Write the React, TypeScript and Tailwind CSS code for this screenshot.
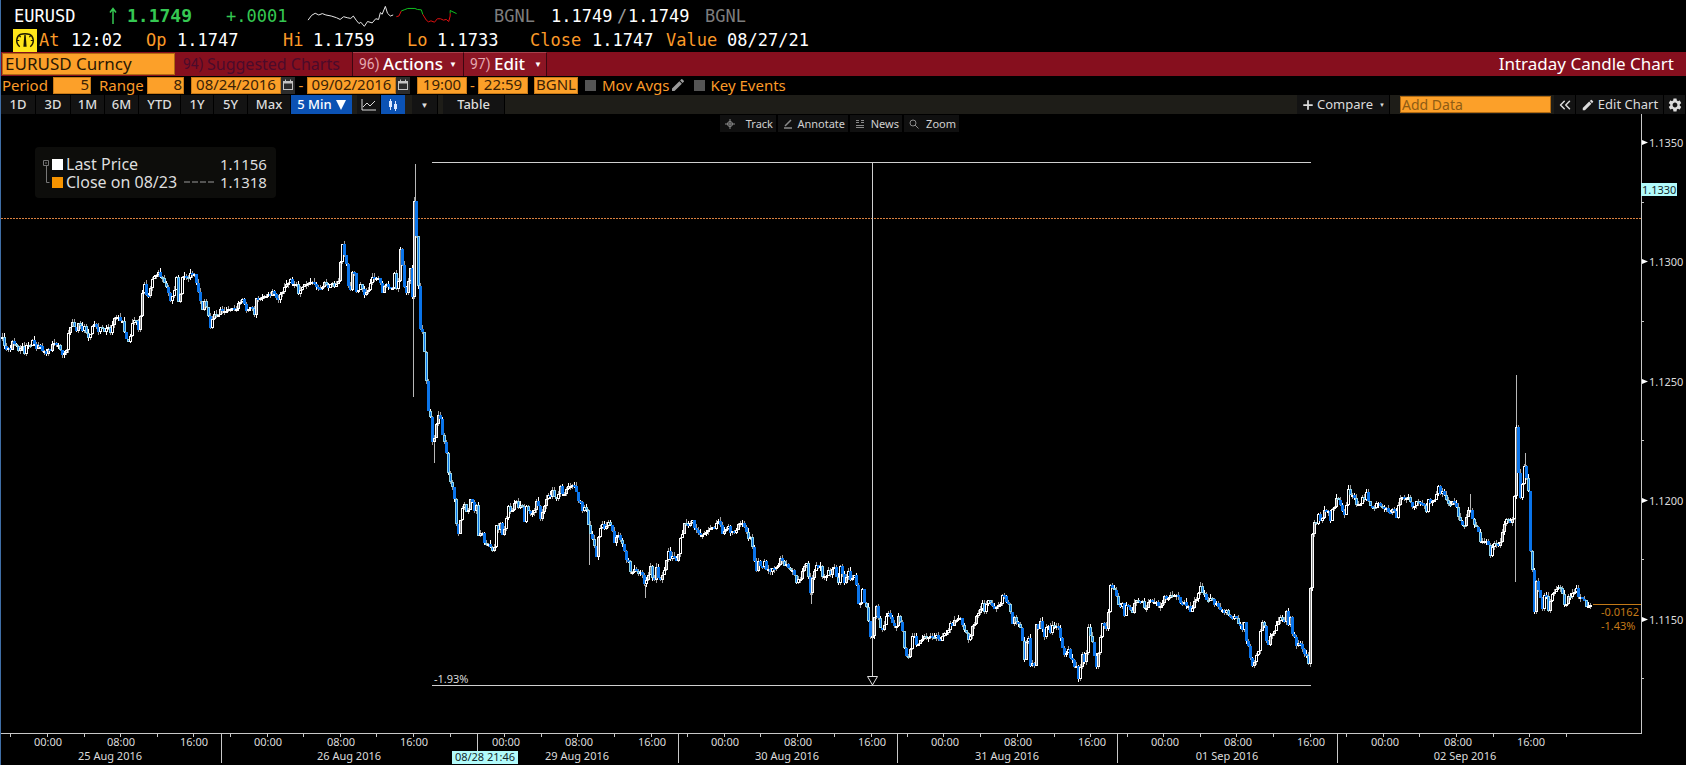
import { ChevronsLeft, Plus } from "lucide-react";
import { MdEdit, MdSettings } from "react-icons/md";

// Each stretch of the price line keeps its own origin and grid resolution.
interface Stretch {
  x0: number;
  y0: number;
  sx: number;
  sy: number;
  points: string;
}

interface Candle {
  x: number;
  top: number;
  h: number;
  high: number;
  low: number;
  fill: string;
  stroke: string;
}

const STRETCHES: Stretch[] = [
  {
    x0: 0, y0: 120, sx: 2.8, sy: 3,
    points:
      "3,655 15,672 28,700 40,660 50,697 58,672 70,697 80,670 95,670 105,680 115,675 125,690 135,692 150,680 163,662 172,692 185,712 195,630 205,610 215,640 222,612 232,640 240,620 252,655 265,605 275,635 285,630 300,628 312,632 322,600 338,595 350,625 360,668 370,625 380,600 390,620 395,580 400,510 408,500 415,540 425,480 435,470 445,450 455,475 465,495 478,545 490,510 496,475 503,570 512,460 525,480 542,460 553,490 560,520 567,565 575,550 585,590 592,620 602,585 612,590 622,570 635,575 645,555 655,570 668,555 680,545 692,570 705,562 715,580 719,525 735,540 750,530 762,515 775,530 788,530 800,500 813,475 825,490 838,512 850,490 865,495 880,490 895,503 908,488 920,500 935,495 948,485 953,470 957,380 962,380 972,430 978,520 985,500 991,440 998,500 1005,520 1010,485 1020,525 1030,510 1048,470 1058,480 1065,475 1074,520 1085,480 1098,515 1106,465 1112,500 1119,480 1122,380 1128,420 1137,535 1145,480 1153,430 1157,560 1160,360 1163,180",
  },
  {
    x0: 380, y0: 150, sx: 3, sy: 3,
    points:
      "109,200 112,300 118,440 122,550 126,490 132,580 137,640 142,700 146,790 152,790 158,870 162,905 168,825 178,795 185,825 192,870 200,890 205,950 210,1000 218,995 224,1030 229,1060 232,1140 236,1160 240,1120 248,1070 253,1045 260,1070 266,1095 272,1055 280,1060 287,1095 291,1070 296,1150 302,1165 305,1130 312,1170 320,1175 330,1185 337,1210 344,1200 350,1135 358,1140 364,1115 370,1160 378,1130 384,1070 393,1095 403,1070 410,1050 420,1075 428,1060 435,1110 440,1075 447,1090 455,1105 462,1075 472,1060 483,1100 492,1065 500,1050 510,1040 520,1025 530,1040 540,1030 543,1010 553,1035 565,1015 578,1000 587,1000 593,1050 600,1035 610,1080 620,1070 626,1120 632,1160 643,1175 650,1230 657,1165 666,1130 676,1140 688,1115 697,1145 706,1175 716,1150 726,1175 738,1215 748,1245 758,1270 768,1255 775,1290 780,1250 790,1280 797,1315 805,1280 812,1245 822,1310 833,1225 838,1300 848,1275 858,1250 867,1200 875,1225 885,1230 893,1235 900,1175 910,1150 917,1105 926,1130 936,1110 947,1130 955,1140 965,1150 978,1140 1000,1138 1018,1120 1028,1145 1045,1138 1060,1140 1075,1135 1085,1110 1095,1130 1105,1160",
  },
  {
    x0: 700, y0: 480, sx: 3, sy: 3,
    points:
      "150,165 158,190 165,240 172,275 178,240 184,275 192,238 200,265 210,278 222,258 235,255 247,238 258,255 268,262 280,265 290,300 302,305 312,250 320,245 328,310 333,330 342,275 352,265 360,255 370,285 380,285 388,260 396,290 403,250 410,280 416,315 421,240 428,290 438,305 447,275 455,300 463,270 470,300 475,360 480,385 488,315 495,360 502,380 508,430 516,510 524,420 531,380 538,420 546,465 556,430 564,405 571,390 578,430 588,455 596,400 604,430 612,480 620,520 629,540 636,470 643,465 650,490 660,485 670,465 680,465 693,465 702,465 712,460 722,475 732,465 744,462 750,430 762,430 775,425 783,420 792,435 800,450 809,495 817,440 826,430 836,405 847,365 856,395 867,350 878,370 890,385 902,375 912,345 920,362 930,385 938,435 946,415 956,435 966,460 974,540 980,490 987,480 993,550 1005,555 1010,435 1018,445 1026,420 1034,465 1042,430 1050,460 1060,435 1073,435 1083,465 1093,515 1105,510 1116,535 1125,570 1132,550 1137,595 1147,520 1158,560 1166,440 1174,460 1183,520 1191,560 1200,490 1207,430 1217,450 1226,430 1231,315 1242,320 1252,360 1260,385 1268,370 1277,415 1282,370 1290,395 1300,395 1310,355 1325,365 1337,385 1352,370 1365,365 1380,370 1395,355 1410,352 1420,345 1432,335 1445,380 1455,355 1470,390 1482,375 1490,355 1500,320",
  },
  {
    x0: 1200, y0: 360, sx: 3, sy: 3,
    points:
      "3,680 10,700 18,720 26,735 30,705 40,725 52,738 65,745 80,755 95,775 108,765 118,785 128,810 134,780 142,845 152,890 163,920 170,890 178,870 187,775 195,800 203,870 212,825 222,830 230,800 238,790 246,775 252,790 260,755 268,790 272,770 280,820 290,860 302,845 312,870 320,890 327,910 331,750 335,640 339,530 344,480 349,520 355,450 362,485 370,465 378,455 386,450 392,490 400,445 406,430 413,410 420,440 428,450 436,475 445,390 455,410 462,405 470,445 478,425 490,415 502,405 510,425 518,440 530,435 550,440 565,450 580,458 593,468 600,420 607,410 618,418 628,410 636,425 644,450 650,420 660,435 668,425 680,450 690,418 703,430 710,400 718,380 725,395 735,410 745,430 758,425 770,435 780,470 790,500 800,480 811,440 820,470 828,510 834,495 843,555 852,545 860,530 867,565 874,590 882,550 890,550 898,570 906,530 913,500 920,470 928,485 936,485 944,480 949,160 953,240 957,330 962,430 968,380 975,320 980,340 984,420 988,380 991,500 994,620 999,640 1005,750 1012,650 1018,690 1027,750 1038,695 1047,755 1056,720 1062,700 1070,680 1080,685 1090,710 1100,740 1108,700 1118,705 1128,690 1140,705 1150,720 1162,735 1178,735",
  },
];

// long wicks: x, top, bottom
const SPIKES = [
  [413, 250, 397],
  [415, 164, 240],
  [434, 440, 463],
  [589, 520, 565],
  [645, 585, 598],
  [811, 590, 604],
  [1470, 494, 510],
  [1515, 510, 582],
  [1516, 375, 440],
  [1525, 453, 470],
];

function buildCandles(): Candle[] {
  const pts = STRETCHES.flatMap((s) =>
    s.points.split(" ").map((p) => {
      const [x, y] = p.split(",").map(Number);
      return [s.x0 + x / s.sx, s.y0 + y / s.sy];
    })
  );

  let seed = 41;
  const rand = () => {
    seed = (seed * 16807) % 2147483647;
    return seed / 2147483647;
  };

  let i = 0;
  const priceAt = (x: number) => {
    while (i < pts.length - 2 && pts[i + 1][0] <= x) i++;
    const [ax, ay] = pts[i];
    const [bx, by] = pts[i + 1];
    const t = Math.max(0, Math.min(1, (x - ax) / (bx - ax)));
    return ay + (by - ay) * t;
  };

  const out: Candle[] = [];
  let open = Math.round(priceAt(1));
  for (let x = 1; x < 1591; x += 2) {
    const close = Math.round(priceAt(x + 2) + (rand() - 0.5) * 7);
    const top = Math.min(open, close);
    const h = Math.max(2, Math.abs(close - open));
    const down = close > open;
    const shade = rand();
    out.push({
      x,
      top,
      h,
      high: top - Math.round(rand() * 4),
      low: top + h + Math.round(rand() * 3),
      fill: down ? "#0a74ea" : shade > 0.5 ? "#000000" : "#8a8a8a",
      stroke: down ? (shade > 0.65 ? "#8fd3ea" : "#0a74ea") : "#ffffff",
    });
    open = close;
  }
  return out;
}

const candles = buildCandles();

const PRICES = [
  { label: "1.1350", y: 142 },
  { label: "1.1300", y: 261 },
  { label: "1.1250", y: 381 },
  { label: "1.1200", y: 500 },
  { label: "1.1150", y: 619 },
];
const HALF_PRICES = [202, 321, 440, 559, 678];

const TIMES = [
  [48, "00:00"], [121, "08:00"], [194, "16:00"],
  [268, "00:00"], [341, "08:00"], [414, "16:00"],
  [506, "00:00"], [579, "08:00"], [652, "16:00"],
  [725, "00:00"], [798, "08:00"], [872, "16:00"],
  [945, "00:00"], [1018, "08:00"], [1092, "16:00"],
  [1165, "00:00"], [1238, "08:00"], [1311, "16:00"],
  [1385, "00:00"], [1458, "08:00"], [1531, "16:00"],
] as const;

const DATES = [
  [110, "25 Aug 2016"],
  [349, "26 Aug 2016"],
  [577, "29 Aug 2016"],
  [787, "30 Aug 2016"],
  [1007, "31 Aug 2016"],
  [1227, "01 Sep 2016"],
  [1465, "02 Sep 2016"],
] as const;

const TICKS = [
  10, 47, 84, 120, 157, 193, 230, 267, 303, 340, 376, 413, 450, 504, 541, 577, 614, 651, 687, 724,
  760, 797, 834, 871, 907, 943, 980, 1017, 1054, 1090, 1127, 1163, 1200, 1236, 1273, 1310, 1346,
  1383, 1419, 1456, 1493, 1529, 1566,
];
const DAY_BREAKS = [221, 477, 678, 897, 1117, 1337];

const RANGES = [
  { label: "1D", width: "w-[35px]" },
  { label: "3D", width: "w-[35px]" },
  { label: "1M", width: "w-[34px]" },
  { label: "6M", width: "w-[34px]" },
  { label: "YTD", width: "w-[42px]" },
  { label: "1Y", width: "w-[33px]" },
  { label: "5Y", width: "w-[34px]" },
  { label: "Max", width: "w-[43px]" },
];

const toolButton =
  "h-full shrink-0 flex items-center justify-center border-r border-black bg-[#131313] text-[#dcdcdc]";
const field =
  "h-[17px] shrink-0 border border-[#c87a18] bg-[#fca029] px-px pb-[2px] text-[15px] leading-none text-[#3b2206] outline-none";
const menuButton =
  "flex h-full shrink-0 items-center border-t border-r border-t-[#a8404c] border-r-[#3c0610] bg-[#8c1524] pb-[2px] pl-[6px]";

function GaugeIcon() {
  return (
    <svg viewBox="0 0 24 24" className="h-[23px] w-6 bg-[#ffe61a]" fill="none" stroke="#1c1800">
      <path d="M6.500 18.500C1.500 14 3 7.500 7.500 5.500C9 4.700 15 4.700 16.500 5.500C21 7.500 22.500 14 17.500 18.500" strokeWidth="1.500" />
      <path d="M3.500 12h2.500M6 7l1.500 1.500M18 7l-1.500 1.500M20.500 12h-2.500" strokeWidth="1.200" />
      <path d="M11.300 6h1.400l1 12.500h-3.400z" fill="#1c1800" stroke="none" />
    </svg>
  );
}

function Sparkline() {
  return (
    <svg viewBox="862 18 424 64" preserveAspectRatio="none" className="h-[22px] w-[151px]" fill="none">
      <path
        d="M865 62L875 48L885 42L895 47L905 43L915 47L930 50L945 55L955 60L965 52L975 55L985 57L992 50L1000 62L1008 72L1013 68L1023 80L1032 66L1045 70L1055 58L1063 60L1068 40L1073 45L1082 22L1088 42L1096 50L1104 47"
        stroke="#e8e8e8"
        vectorEffect="non-scaling-stroke"
      />
      <path
        d="M1113 52L1120 50L1127 35M1187 45L1197 62L1203 67L1210 64L1220 68L1228 58L1237 58L1245 62L1253 60L1260 66L1264 50V42"
        stroke="#e01010"
        vectorEffect="non-scaling-stroke"
      />
      <path
        d="M1127 35L1135 32L1145 28H1165L1172 31L1183 32L1187 45M1264 42V34L1282 43"
        stroke="#10c020"
        vectorEffect="non-scaling-stroke"
      />
    </svg>
  );
}

function CalendarButton({ label }: { label: string }) {
  return (
    <button
      aria-label={label}
      className="flex h-[17px] w-[14px] shrink-0 items-center justify-center bg-[#2c2c2c]"
    >
      <svg viewBox="0 0 12 14" className="h-[14px] w-3" fill="none" stroke="#c4c4c4">
        <rect x="1.500" y="3.500" width="9" height="8" />
        <path d="M1 4.500h10" strokeWidth="2" />
        <path d="M3.500 1.500v2M8.500 1.500v2" />
      </svg>
    </button>
  );
}

function QuoteHeader() {
  return (
    <header className="pt-1 font-['DejaVu_Sans_Mono','Liberation_Mono',monospace] text-[17px] leading-6 text-white">
      <div className="ml-[13px] grid h-6 grid-cols-[94px_19px_99px_81px_187px_57px_66px_11px_77px_auto] items-center">
        <span>EURUSD</span>
        <svg viewBox="0 0 10 18" className="h-[18px] w-[10px]" fill="none" stroke="#35c852">
          <path d="M5 17V2M2 5.500L5 1.500L8 5.500" strokeWidth="1.500" />
        </svg>
        <span className="text-[18px] font-bold text-[#35c852]">1.1749</span>
        <span className="text-[#35c852]">+.0001</span>
        <Sparkline />
        <span className="text-[#7d7d7d]">BGNL</span>
        <span>1.1749</span>
        <span className="text-[#9a9a9a]">/</span>
        <span>1.1749</span>
        <span className="text-[#7d7d7d]">BGNL</span>
      </div>
      <div className="ml-3 grid h-6 grid-cols-[26px_32px_75px_31px_106px_30px_94px_30px_93px_62px_74px_61px_auto] items-center">
        <GaugeIcon />
        <span className="text-[#fb9a28]">At</span>
        <span>12:02</span>
        <span className="text-[#fb9a28]">Op</span>
        <span>1.1747</span>
        <span className="text-[#fb9a28]">Hi</span>
        <span>1.1759</span>
        <span className="text-[#fb9a28]">Lo</span>
        <span>1.1733</span>
        <span className="text-[#fb9a28]">Close</span>
        <span>1.1747</span>
        <span className="text-[#fb9a28]">Value</span>
        <span>08/27/21</span>
      </div>
    </header>
  );
}

function MenuBar() {
  return (
    <nav className="flex h-6 items-center bg-[#860f1e] text-[17px] leading-none whitespace-nowrap text-white">
      <input
        aria-label="Security"
        defaultValue="EURUSD Curncy"
        className="ml-px h-[22px] w-[173px] shrink-0 border border-[#b06a12] bg-[#fca029] px-[2px] pb-[2px] text-[#2a1804] outline-none"
      />
      <button className="flex h-full w-[178px] shrink-0 items-center border-r border-[#3c0610] pb-px pl-2 text-[#4b0b2b]">
        <span className="w-6 text-left font-['Roboto'] text-[14px]">94)</span>
        <span className="text-[16px]">Suggested Charts</span>
      </button>
      <button className={`${menuButton} w-[111px]`}>
        <span className="w-6 text-left font-['Roboto'] text-[14px] text-[#e4a8b0]">96)</span>
        <span className="w-[66px] text-left font-medium">Actions</span>
        <span className="text-[8px]">▼</span>
      </button>
      <button className={`${menuButton} w-[83px]`}>
        <span className="w-6 text-left font-['Roboto'] text-[14px] text-[#e4a8b0]">97)</span>
        <span className="w-10 text-left font-medium">Edit</span>
        <span className="text-[8px]">▼</span>
      </button>
      <h1 className="ml-auto pr-3 pb-[2px]">Intraday Candle Chart</h1>
    </nav>
  );
}

function PeriodRow() {
  return (
    <form className="flex h-[19px] items-center pb-px text-[15px] leading-none text-[#fb9a28]">
      <label htmlFor="period" className="w-[52px] shrink-0 pl-px">Period</label>
      <input id="period" defaultValue="5" className={`${field} w-[38px] text-right`} />
      <label htmlFor="range" className="w-14 shrink-0 pl-2">Range</label>
      <input id="range" defaultValue="8" className={`${field} mr-[7px] w-[37px] text-right`} />
      <input aria-label="From date" defaultValue="08/24/2016" className={`${field} w-[90px] text-center`} />
      <CalendarButton label="Pick start date" />
      <span className="w-3 shrink-0 text-center">-</span>
      <input aria-label="To date" defaultValue="09/02/2016" className={`${field} w-[89px] text-center`} />
      <CalendarButton label="Pick end date" />
      <input aria-label="From time" defaultValue="19:00" className={`${field} ml-[7px] w-[50px] text-center`} />
      <span className="w-[11px] shrink-0 text-center">-</span>
      <input aria-label="To time" defaultValue="22:59" className={`${field} mr-[6px] w-[50px] text-center`} />
      <input aria-label="Source" defaultValue="BGNL" className={`${field} w-[44px]`} />
      <label className="ml-[7px] flex shrink-0 items-center gap-[6px]">
        <input type="checkbox" className="size-[11px] appearance-none bg-[#555555]" />
        Mov Avgs
      </label>
      <MdEdit className="size-4 shrink-0 text-[#9a9a9a]" />
      <label className="ml-2 flex shrink-0 items-center gap-[6px]">
        <input type="checkbox" className="size-[11px] appearance-none bg-[#555555]" />
        Key Events
      </label>
    </form>
  );
}

function ChartToolbar() {
  return (
    <div className="flex h-[19px] items-center bg-[#1e1d18] text-[13px] leading-none whitespace-nowrap">
      {RANGES.map((r) => (
        <button key={r.label} className={`${toolButton} ${r.width} font-medium`}>
          {r.label}
        </button>
      ))}
      <button className="mr-[5px] flex h-full w-[61px] shrink-0 items-center justify-center gap-1 bg-[#0b52b4] font-medium text-white">
        5 Min
        <svg viewBox="0 0 10 10" className="size-[10px]" fill="currentColor">
          <path d="M0 0h10L5 10z" />
        </svg>
      </button>
      <button aria-label="Line chart" className={`${toolButton} w-6`}>
        <svg viewBox="0 0 15 12" className="h-3 w-[15px]" fill="none" stroke="currentColor">
          <path d="M1 0v11h14M2 8l4-4l3 3l5-5" />
        </svg>
      </button>
      <button
        aria-label="Candle chart"
        className="mr-[7px] flex h-full w-6 shrink-0 items-center justify-center bg-[#0b52b4] text-[#d8e6ff]"
      >
        <svg viewBox="0 0 10 12" className="h-3 w-[10px]" fill="currentColor">
          <path d="M1 2h3v6h-3zM2 0h1v11h-1zM6 5h3v5h-3zM7 2h1v10h-1z" />
        </svg>
      </button>
      <button aria-label="More chart types" className={`${toolButton} mr-[5px] w-[26px] text-[8px]`}>▼</button>
      <button className={`${toolButton} w-[62px] font-medium`}>Table</button>

      <button className={`${toolButton} mr-[10px] ml-auto w-[93px] gap-[2px]`}>
        <Plus className="size-[14px]" strokeWidth={3} />
        Compare
        <span className="ml-1 text-[6px]">▼</span>
      </button>
      <input
        aria-label="Add Data"
        placeholder="Add Data"
        className="mr-[3px] h-[17px] w-[151px] shrink-0 border border-[#b06a12] bg-[#fca029] px-px pb-px text-[14px] leading-none outline-none placeholder:text-[#8f5c14]"
      />
      <button aria-label="Collapse" className={`${toolButton} w-[22px]`}>
        <ChevronsLeft className="size-[18px]" />
      </button>
      <button className={`${toolButton} w-[88px] gap-[3px]`}>
        <MdEdit className="size-[14px]" />
        Edit Chart
      </button>
      <button aria-label="Settings" className={`${toolButton} w-[22px]`}>
        <MdSettings className="size-4" />
      </button>
    </div>
  );
}

function OverlayTools() {
  const button = "flex h-[17px] items-center justify-between bg-[#101010] pr-[3px] pl-[5px]";
  const icon = "size-[10px] text-[#8a8a8a]";
  return (
    <div className="absolute inset-x-0 top-px flex justify-center gap-[2px] pr-2 text-[11px] leading-none text-[#d0d0d0]">
      <button className={`${button} w-14`}>
        <svg viewBox="0 0 10 10" className={icon} fill="none" stroke="currentColor">
          <path d="M5 0v10M0 5h10" />
          <circle cx="5" cy="5" r="2.500" />
        </svg>
        Track
      </button>
      <button className={`${button} w-[70px]`}>
        <svg viewBox="0 0 10 10" className={icon} fill="none" stroke="currentColor">
          <path d="M2 7L8 1M1 9h8" strokeWidth="1.500" />
        </svg>
        Annotate
      </button>
      <button className={`${button} w-[52px]`}>
        <svg viewBox="0 0 10 10" className={icon} fill="none" stroke="currentColor">
          <path d="M1 1.500h3M1 3.500h3M6 1.500h3M6 3.500h3M1 6.500h8M1 8.500h8" />
        </svg>
        News
      </button>
      <button className={`${button} w-[55px]`}>
        <svg viewBox="0 0 10 10" className={icon} fill="none" stroke="currentColor">
          <circle cx="4" cy="4" r="3" />
          <path d="M6 6l3.500 3.500" />
        </svg>
        Zoom
      </button>
    </div>
  );
}

function Legend() {
  return (
    <div className="absolute top-[33px] left-[34px] flex h-[51px] w-[241px] gap-[2px] rounded-sm bg-[#0d0d0b] pt-2 pl-2 text-[#dedede]">
      <svg viewBox="0 0 7 36" className="h-9 w-[7px]" fill="none" stroke="#777">
        <path d="M.5 5.500h5v5h-5zM2 8h2M3.500 11v16.500h3" />
      </svg>
      <div className="grid h-9 grid-cols-[14px_118px_36px_auto] items-center text-[16px] leading-[18px]">
        <span className="size-[11px] bg-white" />
        <span>Last Price</span>
        <span />
        <span className="text-[15px]">1.1156</span>
        <span className="size-[11px] bg-[#f79400]" />
        <span>Close on 08/23</span>
        <svg viewBox="0 0 30 2" className="h-[2px] w-[30px]" stroke="#9a9a9a">
          <path d="M0 1h30" strokeDasharray="6 2" />
        </svg>
        <span className="text-[15px]">1.1318</span>
      </div>
    </div>
  );
}

function PriceChart() {
  return (
    <main className="relative">
      <svg viewBox="1 114 1685 651" className="block w-full text-[11px]" fill="none">
        {/* previous close */}
        <path d="M1 218.500H1641" stroke="#d9803f" strokeDasharray="2 1" shapeRendering="crispEdges" />

        {/* candles */}
        <g shapeRendering="crispEdges">
          {SPIKES.map(([x, top, bottom]) => (
            <path key={x} d={`M${x + 0.5} ${top}V${bottom}`} stroke="#b8b8b8" />
          ))}
          {candles.map((c) => (
            <g key={c.x}>
              <path d={`M${c.x + 1.5} ${c.high}V${c.low}`} stroke={c.x % 3 ? "#9c9c9c" : "#ffffff"} />
              <path d={`M${c.x + 0.5} ${c.top + 0.5}h2v${c.h - 1}h-2z`} fill={c.fill} stroke={c.stroke} />
            </g>
          ))}
        </g>

        {/* range measure */}
        <g stroke="#cfcfcf" shapeRendering="crispEdges">
          <path d="M432 162.500H1311M432 685.500H1311M872.500 163V676" />
        </g>
        <path d="M867.500 676.500h10l-5 8.500z" stroke="#e0e0e0" fill="#000" />
        <text x="434" y="683" fill="#d8d8d8">-1.93%</text>

        {/* last price */}
        <path d="M1593 604.500H1641" stroke="#c47a18" shapeRendering="crispEdges" />
        <text x="1601" y="616" fill="#c47a18">-0.0162</text>
        <text x="1601" y="630" fill="#c47a18">-1.43%</text>

        {/* axes */}
        <g stroke="#c8c8c8" shapeRendering="crispEdges">
          <path d="M1 733.500H1641M1641.500 114V734" />
          {HALF_PRICES.map((y) => (
            <path key={y} d={`M1641 ${y + 0.5}h3`} />
          ))}
          {TICKS.map((x) => (
            <path key={x} d={`M${x + 0.5} 734v3`} />
          ))}
          {DAY_BREAKS.map((x) => (
            <path key={x} d={`M${x + 0.5} 734v29`} />
          ))}
        </g>

        {PRICES.map((p) => (
          <g key={p.label} fill="#dcdcdc">
            <path d={`M1642 ${p.y - 2}l6 2.500l-6 2.500z`} fill="#fff" />
            <text x="1649" y={p.y + 5}>{p.label}</text>
          </g>
        ))}
        <rect x="1641" y="183" width="36" height="13" fill="#b2fbfb" />
        <text x="1642" y="194" fill="#12292b">1.1330</text>

        <g fill="#dcdcdc" textAnchor="middle">
          {TIMES.map(([x, label]) => (
            <text key={x} x={x} y="746">{label}</text>
          ))}
          {DATES.map(([x, label]) => (
            <text key={x} x={x} y="760">{label}</text>
          ))}
          <rect x="452" y="751" width="66" height="13" fill="#b2fbfb" />
          <text x="485" y="761" fill="#12292b">08/28 21:46</text>
        </g>
      </svg>
      <OverlayTools />
      <Legend />
    </main>
  );
}

export default function App() {
  return (
    <div className="overflow-hidden border-l border-[#3f6ea6] bg-black font-['Noto_Sans','Open_Sans',sans-serif]">
      <QuoteHeader />
      <MenuBar />
      <PeriodRow />
      <ChartToolbar />
      <PriceChart />
    </div>
  );
}
